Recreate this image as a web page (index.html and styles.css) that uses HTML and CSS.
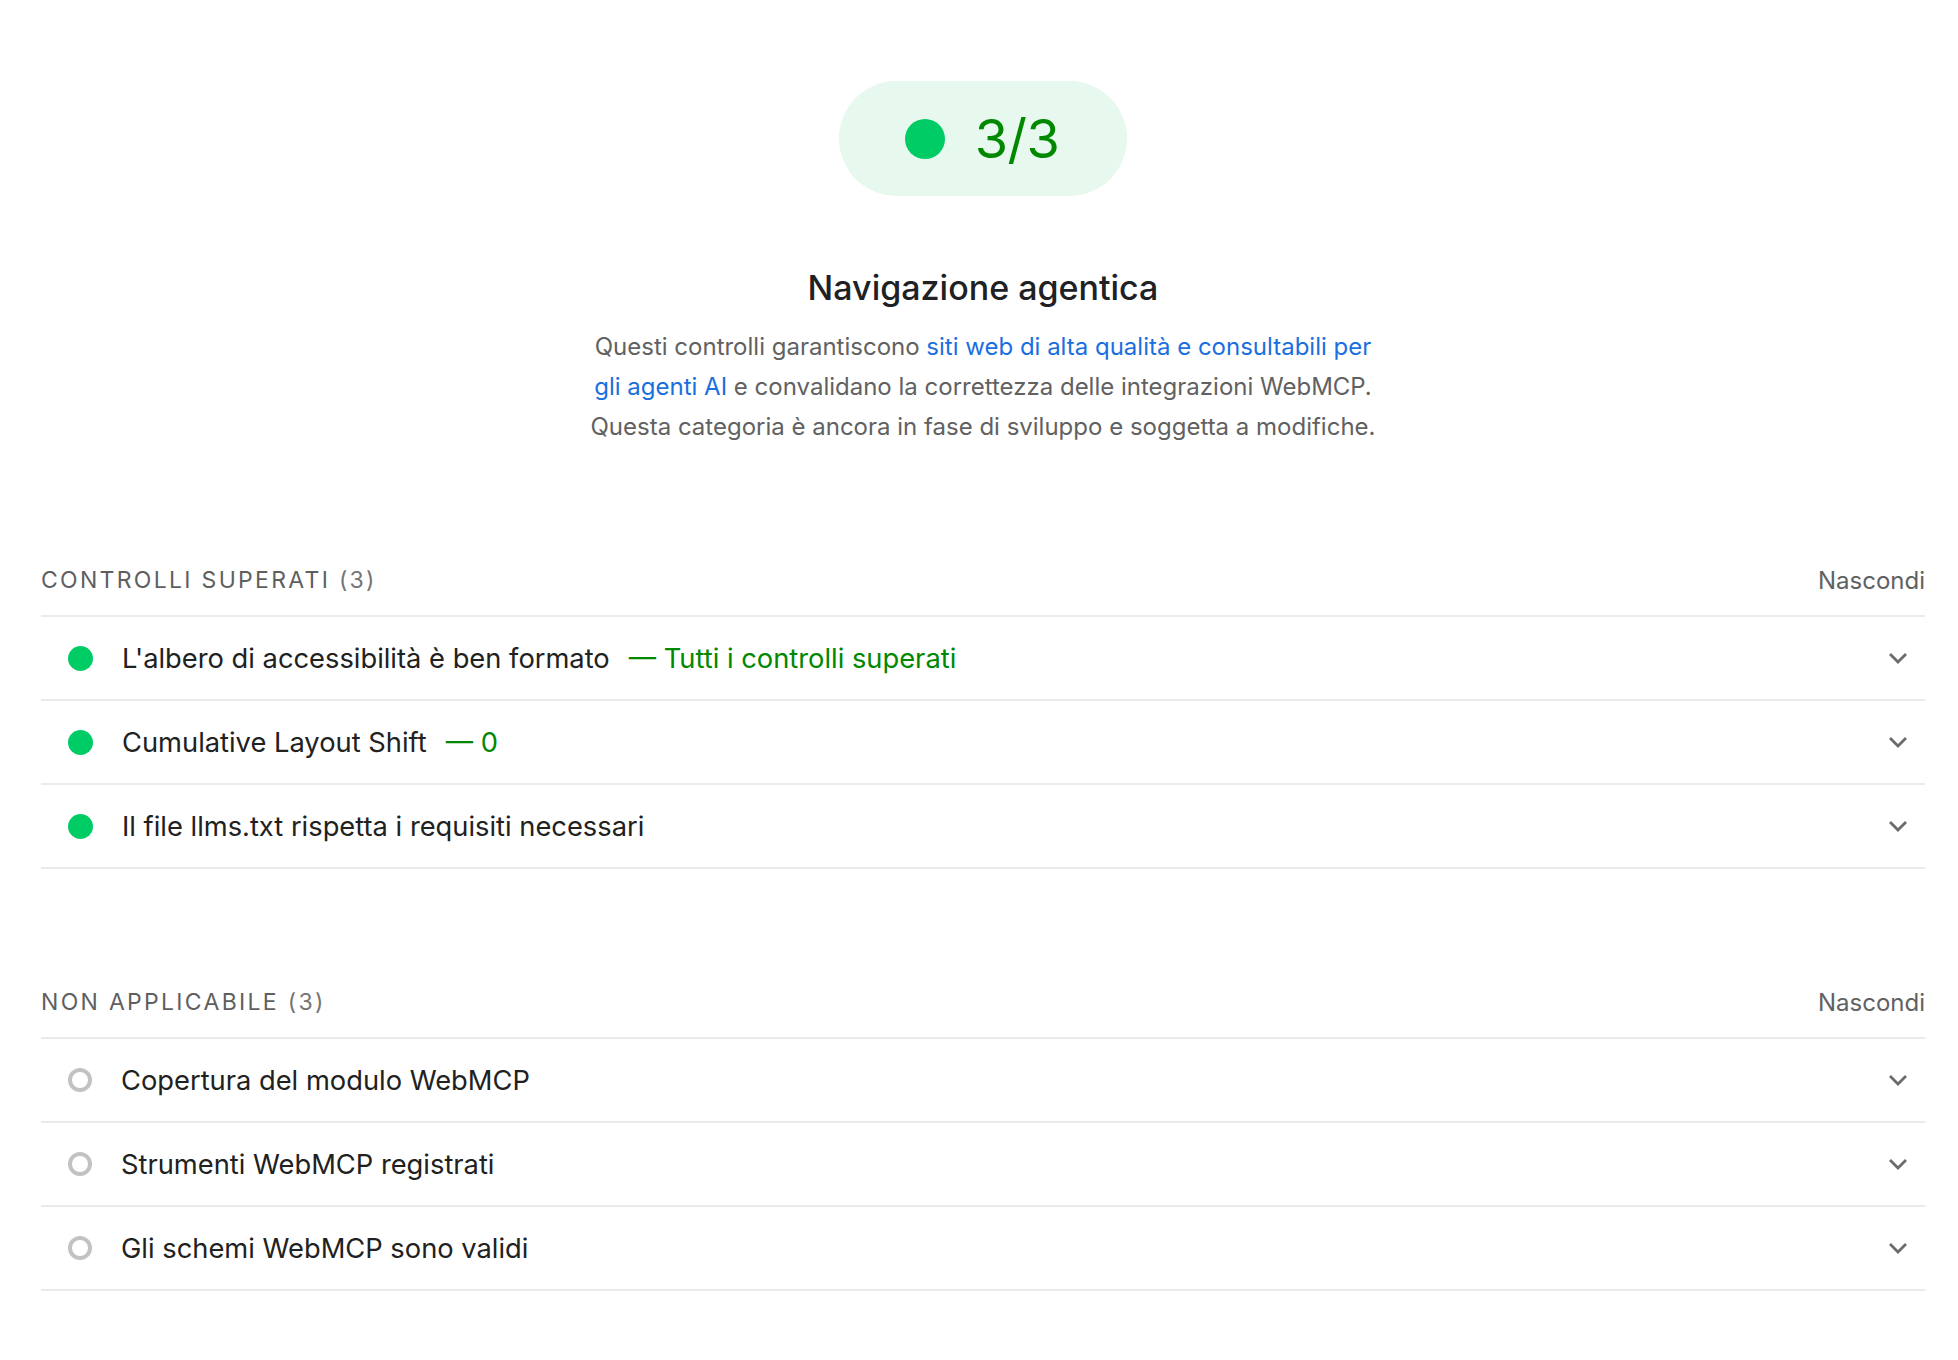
FILE: index.html
```html
<!DOCTYPE html>
<html lang="it">
<head>
<meta charset="utf-8">
<title>Navigazione agentica</title>
<link rel="stylesheet" href="styles.css">
</head>
<body>
<main class="report">
  <div class="gauge-wrap">
    <div class="gauge">
      <span class="gauge-dot"></span>
      <span class="gauge-score">3/3</span>
    </div>
  </div>
  <h1 class="cat-title">Navigazione agentica</h1>
  <p class="cat-desc">Questi controlli garantiscono <a href="#" class="link">siti web di alta qualità e consultabili per<br>gli agenti AI</a> e convalidano la correttezza delle integrazioni WebMCP.<br>Questa categoria è ancora in fase di sviluppo e soggetta a modifiche.</p>

  <section class="group group-first">
    <div class="group-header">
      <span class="group-title">Controlli superati <span class="group-count">(3)</span></span>
      <span class="group-toggle">Nascondi</span>
    </div>
    <div class="audit">
      <span class="audit-icon pass"></span>
      <span class="audit-title">L'albero di accessibilità è ben formato</span>
      <span class="audit-value">— Tutti i controlli superati</span>
      <svg class="chevron" viewBox="0 0 20 12" width="20" height="12"><polyline points="2,2 10,10 18,2"/></svg>
    </div>
    <div class="audit">
      <span class="audit-icon pass"></span>
      <span class="audit-title">Cumulative Layout Shift</span>
      <span class="audit-value">— 0</span>
      <svg class="chevron" viewBox="0 0 20 12" width="20" height="12"><polyline points="2,2 10,10 18,2"/></svg>
    </div>
    <div class="audit">
      <span class="audit-icon pass"></span>
      <span class="audit-title">Il file llms.txt rispetta i requisiti necessari</span>
      <svg class="chevron" viewBox="0 0 20 12" width="20" height="12"><polyline points="2,2 10,10 18,2"/></svg>
    </div>
  </section>

  <section class="group">
    <div class="group-header">
      <span class="group-title">Non applicabile <span class="group-count">(3)</span></span>
      <span class="group-toggle">Nascondi</span>
    </div>
    <div class="audit">
      <span class="audit-icon na"></span>
      <span class="audit-title">Copertura del modulo WebMCP</span>
      <svg class="chevron" viewBox="0 0 20 12" width="20" height="12"><polyline points="2,2 10,10 18,2"/></svg>
    </div>
    <div class="audit">
      <span class="audit-icon na"></span>
      <span class="audit-title">Strumenti WebMCP registrati</span>
      <svg class="chevron" viewBox="0 0 20 12" width="20" height="12"><polyline points="2,2 10,10 18,2"/></svg>
    </div>
    <div class="audit">
      <span class="audit-icon na"></span>
      <span class="audit-title">Gli schemi WebMCP sono validi</span>
      <svg class="chevron" viewBox="0 0 20 12" width="20" height="12"><polyline points="2,2 10,10 18,2"/></svg>
    </div>
  </section>
</main>
</body>
</html>
```

FILE: styles.css
```css
* { box-sizing: border-box; }

html, body {
  margin: 0;
  padding: 0;
  background: #ffffff;
}

body {
  font-family: Inter, "Liberation Sans", Arial, sans-serif;
  color: #212121;
}

.report {
  padding: 81px 33px 60px 41px;
}

.gauge-wrap {
  display: flex;
  justify-content: center;
}

.gauge {
  display: inline-flex;
  align-items: center;
  gap: 30px;
  height: 115px;
  padding: 0 68px 0 66px;
  border-radius: 58px;
  background: #e7f8ee;
}

.gauge-dot {
  width: 40px;
  height: 40px;
  border-radius: 50%;
  background: #00cc66;
}

.gauge-score {
  font-size: 54px;
  line-height: 1;
  color: #008800;
  letter-spacing: -0.5px;
}

.cat-title {
  margin: 70px 0 0;
  text-align: center;
  font-size: 34px;
  line-height: 44px;
  font-weight: 500;
  color: #202124;
}

.cat-desc {
  margin: 17px 0 0;
  text-align: center;
  font-size: 24px;
  line-height: 40px;
  color: #616161;
  white-space: nowrap;
}

.link {
  color: #1a6fe0;
  text-decoration: none;
}

.group {
  margin-top: 98px;
}

.group-first {
  margin-top: 98px;
}

.group-header {
  display: flex;
  align-items: center;
  justify-content: space-between;
  height: 72px;
  border-bottom: 2px solid #ebebeb;
}

.group-title {
  font-size: 23px;
  font-weight: 400;
  letter-spacing: 2.3px;
  text-transform: uppercase;
  color: #5f5f5f;
}

.group-count {
  color: #757575;
}

.group-toggle {
  font-size: 24px;
  color: #616161;
}

.audit {
  display: flex;
  align-items: center;
  height: 84px;
  padding: 0 17px 0 27px;
  border-bottom: 2px solid #ebebeb;
}

.audit-icon {
  flex: none;
  width: 25px;
  height: 25px;
  border-radius: 50%;
  margin-right: 29px;
}

.audit-icon.pass {
  background: #00cc66;
}

.audit-icon.na {
  width: 24px;
  height: 24px;
  border: 4px solid #c2c2c2;
  background: #ffffff;
}

.audit-title {
  font-size: 27.3px;
  color: #212121;
}

.audit-value {
  margin-left: 19px;
  font-size: 27.3px;
  color: #008800;
}

.chevron {
  margin-left: auto;
  fill: none;
  stroke: #6b6b6b;
  stroke-width: 2.8;
}
```
